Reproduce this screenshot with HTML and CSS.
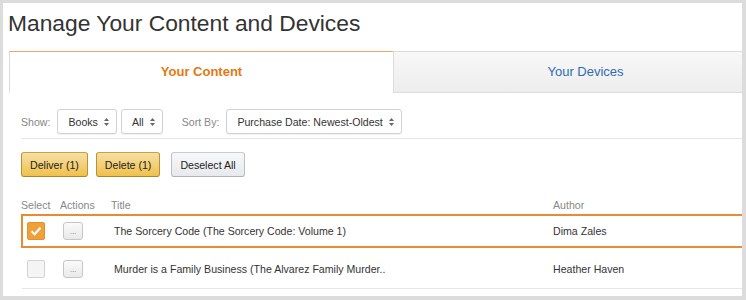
FILE: index.html
```html
<!DOCTYPE html>
<html lang="en">
<head>
    <meta charset="UTF-8">
    <meta name="viewport" content="width=device-width, initial-scale=1.0">
    <title>Manage Your Content and Devices</title>
    <link rel="stylesheet" href="styles.css">
</head>
<body>
    <div class="frame">
        <h1 class="page-title">Manage Your Content and Devices</h1>
        <div class="tabs">
            <div class="tab tab-active">Your Content</div>
            <div class="tab">Your Devices</div>
        </div>
        <div class="content">
            <div class="filters">
                <span class="label">Show:</span>
                <span class="select">Books <svg class="arrows" width="5" height="8" viewBox="0 0 5 8"><path d="M2.5 0L5 3H0z M2.5 8L0 5h5z"/></svg></span>
                <span class="select">All <svg class="arrows" width="5" height="8" viewBox="0 0 5 8"><path d="M2.5 0L5 3H0z M2.5 8L0 5h5z"/></svg></span>
                <span class="label label-sort">Sort By:</span>
                <span class="select">Purchase Date: Newest-Oldest <svg class="arrows" width="5" height="8" viewBox="0 0 5 8"><path d="M2.5 0L5 3H0z M2.5 8L0 5h5z"/></svg></span>
            </div>
            <div class="actions">
                <button class="btn btn-primary">Deliver (1)</button>
                <button class="btn btn-primary">Delete (1)</button>
                <button class="btn btn-secondary">Deselect All</button>
            </div>
            <div class="table">
                <div class="table-head">
                    <span>Select</span>
                    <span>Actions</span>
                    <span>Title</span>
                    <span>Author</span>
                </div>
                <div class="table-row row-selected">
                    <span class="checkbox checked">
                        <svg width="12" height="10" viewBox="0 0 12 10"><path d="M1.5 5.2L4.6 8.2L10.5 1.8" fill="none" stroke="#fff" stroke-width="2.2"/></svg>
                    </span>
                    <span class="more-btn">...</span>
                    <span class="cell-title">The Sorcery Code (The Sorcery Code: Volume 1)</span>
                    <span class="cell-author">Dima Zales</span>
                </div>
                <div class="table-row row-last">
                    <span class="checkbox"></span>
                    <span class="more-btn">...</span>
                    <span class="cell-title">Murder is a Family Business (The Alvarez Family Murder..</span>
                    <span class="cell-author">Heather Haven</span>
                </div>
            </div>
        </div>
    </div>
</body>
</html>
```

FILE: styles.css
```css
* { box-sizing: border-box; }
body { margin: 0; padding: 0; background: #dcdcdc; font-family: "Liberation Sans", Arial, sans-serif; color: #333; }
.frame { margin: 3px 0 0 3px; width: 739px; height: 293px; background: #fff; overflow: hidden; }
.page-title { margin: 6px 0 0 5px; font-size: 22.8px; line-height: 28px; font-weight: normal; color: #333; white-space: nowrap; }

.tabs { display: flex; margin: 14px 0 0 6px; width: 800px; }
.tab { flex: none; width: 384px; height: 42px; line-height: 40px; text-align: center; font-size: 13px; color: #2f6bb2; background: linear-gradient(#f8f8f8, #ededed); border-top: 1px solid #dcdcdc; border-bottom: 1px solid #dcdcdc; border-left: 1px solid #dcdcdc; }
.tab-active { color: #e47911; font-weight: bold; background: #fff; border-top: 1px solid #eba669; border-bottom: 1px solid #fff; }

.content { padding-left: 18px; }
.filters { display: flex; align-items: center; padding: 16px 0 4px; border-bottom: 1px solid #e7e7e7; font-size: 10.6px; }
.label { color: #888; margin-right: 7px; }
.label-sort { margin-left: 15px; }
.select { display: flex; align-items: center; height: 25px; padding: 0 7px 0 10px; margin-right: 4px; border: 1px solid #cfd1d5; border-radius: 3px; background: #fff; box-shadow: 0 1px 0 rgba(0,0,0,0.05); color: #333; white-space: nowrap; }
.arrows { margin-left: 6px; fill: #666; }

.actions { display: flex; margin-top: 13px; }
.btn { height: 25px; padding: 0 8px; font-family: inherit; font-size: 10.6px; color: #222; border-radius: 3px; cursor: pointer; }
.btn-primary { margin-right: 8px; background: linear-gradient(#f7dfa5, #f0c14b); border: 1px solid; border-color: #c9a23f #b8923a #a88734; }
.btn-primary + .btn-secondary { margin-left: 3px; }
.btn-secondary { background: linear-gradient(#f7f8fa, #e7e9ec); border: 1px solid; border-color: #c8cbd0 #bcc0c6 #adb1b8; }

.table { margin: 20px -10px 0 0; font-size: 10.6px; }
.table-head, .table-row { display: grid; grid-template-columns: 39px 51px 442px 1fr; align-items: center; }
.table-head { height: 17px; line-height: 17px; color: #888; }
.table-row { grid-template-columns: 37px 51px 442px 1fr; border: 2px solid transparent; }
.row-selected { height: 34px; border-color: #e88c33; }
.row-last { height: 41px; border-bottom: 1px solid #e6e6e6; }

.checkbox { display: flex; align-items: center; justify-content: center; width: 18px; height: 18px; margin-left: 4px; border: 1px solid #d3d3d3; border-radius: 2px; background: #f4f4f4; }
.checkbox.checked { background: #eea03c; border-color: #e39229; }
.more-btn { display: block; width: 20px; height: 18px; margin-left: 3px; border: 1px solid #c6c6c6; border-radius: 3px; background: linear-gradient(#fafafa, #e9e9e9); font-size: 8px; line-height: 18px; text-align: center; color: #777; }
.cell-title { padding-left: 3px; color: #333; white-space: nowrap; }
.cell-author { color: #333; white-space: nowrap; }
```
